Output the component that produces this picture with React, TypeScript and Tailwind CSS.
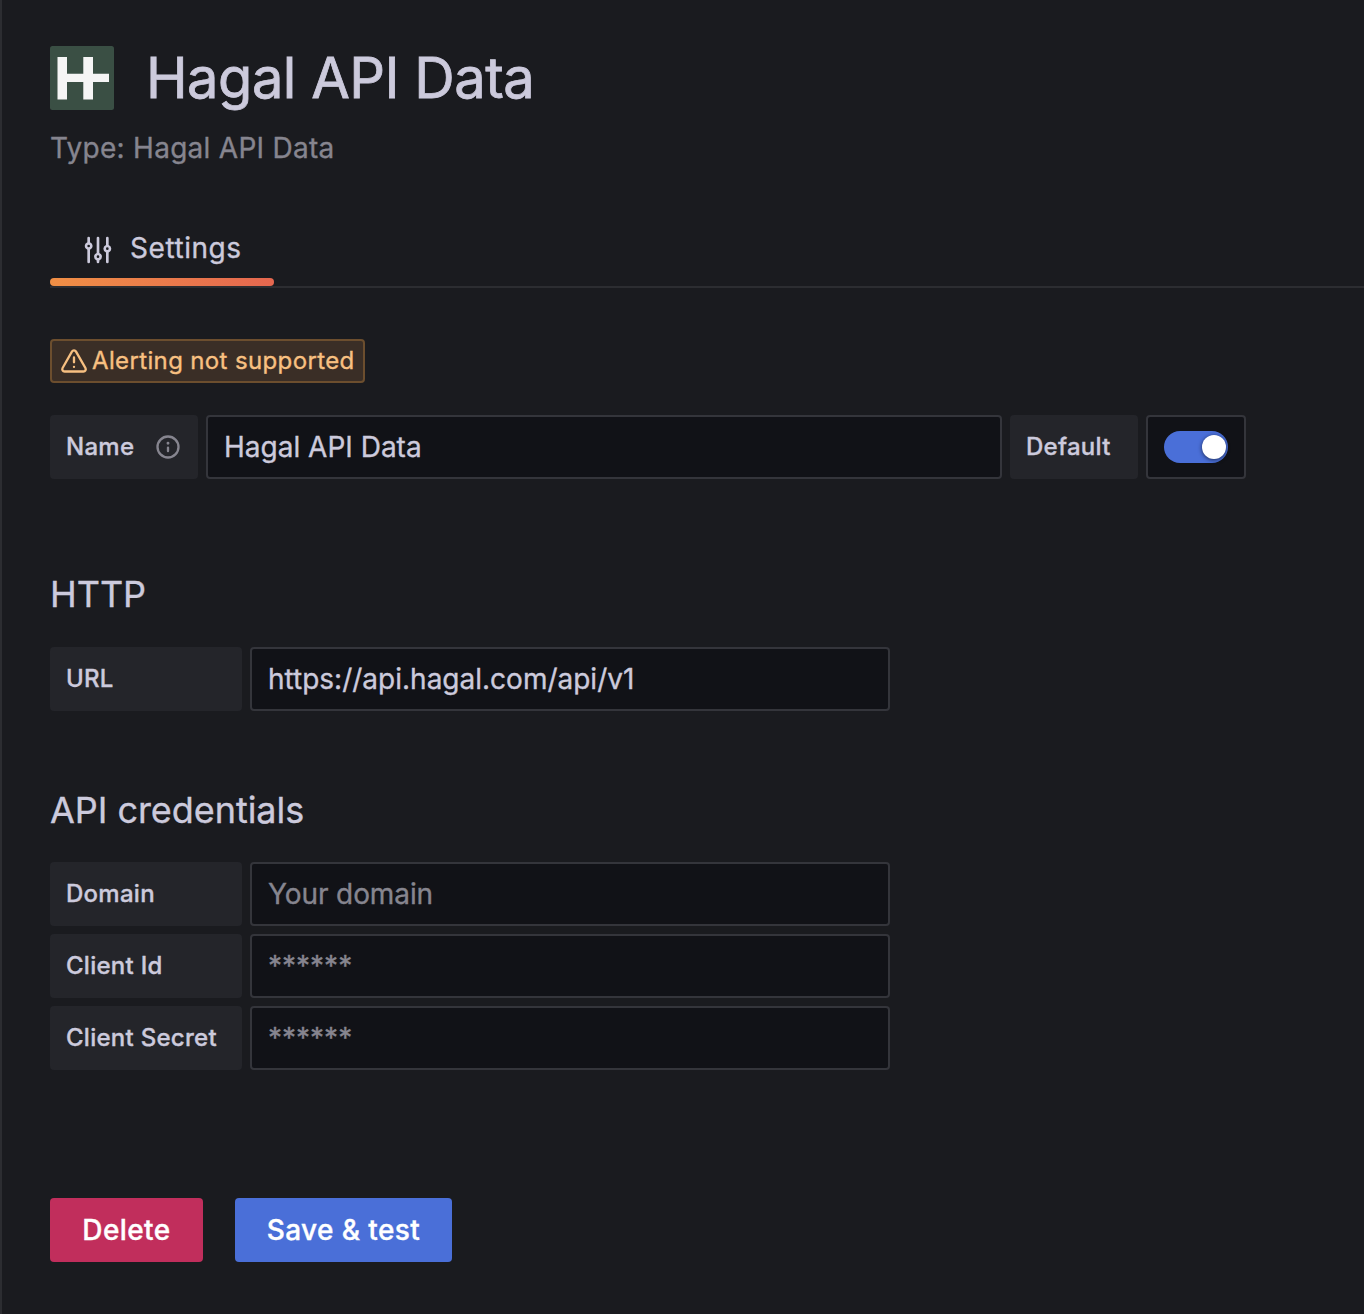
import React from "react";

const ICONS = {
  sliders:
    "M20,8.18V3a1,1,0,0,0-2,0V8.18a3,3,0,0,0,0,5.64V21a1,1,0,0,0,2,0V13.82a3,3,0,0,0,0-5.64ZM19,12a1,1,0,1,1,1-1A1,1,0,0,1,19,12Zm-6,2.18V3a1,1,0,0,0-2,0V14.18a3,3,0,0,0,0,5.64V21a1,1,0,0,0,2,0V19.82a3,3,0,0,0,0-5.64ZM12,18a1,1,0,1,1,1-1A1,1,0,0,1,12,18ZM6,6.18V3A1,1,0,0,0,4,3V6.18a3,3,0,0,0,0,5.64V21a1,1,0,0,0,2,0V11.82A3,3,0,0,0,6,6.18ZM5,10A1,1,0,1,1,6,9,1,1,0,0,1,5,10Z",
  warning:
    "M12,16a1,1,0,1,0,1,1A1,1,0,0,0,12,16Zm10.67,1.47-8.05-14a3,3,0,0,0-5.24,0l-8,14A3,3,0,0,0,3.94,22H20.06a3,3,0,0,0,2.61-4.53Zm-1.73,2a1,1,0,0,1-.88.51H3.94a1,1,0,0,1-.88-.51,1,1,0,0,1,0-1l8-14a1,1,0,0,1,1.78,0l8.05,14A1,1,0,0,1,20.94,19.49ZM12,8a1,1,0,0,0-1,1v4a1,1,0,0,0,2,0V9A1,1,0,0,0,12,8Z",
  info:
    "M12,2A10,10,0,1,0,22,12,10.01,10.01,0,0,0,12,2Zm0,18a8,8,0,1,1,8-8A8.01,8.01,0,0,1,12,20Zm0-8.5a1,1,0,0,0-1,1v3a1,1,0,0,0,2,0v-3A1,1,0,0,0,12,11.5Zm0-4a1.25,1.25,0,1,0,1.25,1.25A1.25,1.25,0,0,0,12,7.5Z",
};

function Icon({ name, className }: { name: keyof typeof ICONS; className: string }) {
  return (
    <svg viewBox="0 0 24 24" fill="currentColor" className={`shrink-0 ${className}`}>
      <path d={ICONS[name]} />
    </svg>
  );
}

function Label({ children, className, icon }: { children: React.ReactNode; className: string; icon?: React.ReactNode }) {
  return (
    <div className={`flex h-16 shrink-0 items-center justify-between rounded-[4px] bg-[#24252a] px-4 text-[24px] font-medium leading-[30px] tracking-[0.27px] ${className}`}>
      <span className="whitespace-nowrap">{children}</span>
      {icon}
    </div>
  );
}

function Field({ children, className }: { children: React.ReactNode; className: string }) {
  return (
    <div className={`flex h-16 shrink-0 items-center rounded-[4px] border-2 border-[#34353b] bg-[#111217] pl-4 text-[28px] leading-none ${className}`}>
      {children}
    </div>
  );
}

export default function App() {
  return (
    <div className="h-[1314px] w-[1364px] overflow-hidden border-l-2 border-[#2c2d31] bg-[#1a1b1f] pl-12 font-['Inter',sans-serif] text-[#cccadc] [-webkit-text-stroke:0.35px_currentColor]">
      <header className="mt-[46px] flex h-16 items-center">
        <svg width="64" height="64" viewBox="0 0 64 64">
          <rect width="64" height="64" rx="2.5" fill="#3a4f44" />
          <path d="M7.5 11H17v16.7h16.3V11H43v16.7h16v8.4H43v17.4h-9.7V36.1H17v17.4H7.5z" fill="#f5f5f5" />
        </svg>
        <h1 className="ml-8 whitespace-nowrap text-[56px] leading-none tracking-[-0.5px] [-webkit-text-stroke:0.8px_currentColor]">Hagal API Data</h1>
      </header>
      <div className="mt-[20px] h-9 text-[28px] leading-9 tracking-[0.27px] text-[#86858f]">Type: Hagal API Data</div>
      <nav className="mt-[46px] h-[76px] border-b-2 border-[#2c2d31]">
        <div className="flex h-[74px] w-56 flex-col">
          <div className="flex h-[66px] items-center gap-4 pl-8 text-[28px] leading-9 tracking-[0.55px]">
            <Icon name="sliders" className="mt-[10px] size-8" />
            <span className="mt-[6px]">Settings</span>
          </div>
          <div className="h-2 rounded-[4px] bg-linear-to-r from-[#f08f45] to-[#e5674f]" />
        </div>
      </nav>
      <div className="mt-[51px] flex h-11 w-[315px] items-center gap-1 rounded-[4px] border-2 border-[#6c4e2e] bg-[#3a2e26] pl-2 text-[24px] tracking-[0.36px] text-[#f8c081]">
        <Icon name="warning" className="size-7" />
        <span className="whitespace-nowrap">Alerting not supported</span>
      </div>
      <div className="mt-8 flex gap-2">
        <Label className="w-[148px]" icon={<Icon name="info" className="size-7 text-[#86858f]" />}>Name</Label>
        <Field className="w-[796px]">Hagal API Data</Field>
        <Label className="w-32">Default</Label>
        <Field className="w-[100px]">
          <div className="flex h-8 w-16 items-center justify-end rounded-full bg-[#4a6fd8] pr-0.5">
            <div className="size-6 rounded-full bg-white shadow-[0_1px_4px_rgba(0,0,0,0.6)]" />
          </div>
        </Field>
      </div>
      <h2 className="mt-[93px] h-[44px] text-[36px] leading-[44px] tracking-[-0.05px]">HTTP</h2>
      <div className="mt-[31px] flex gap-2">
        <Label className="w-48">URL</Label>
        <Field className="w-[640px]">https://api.hagal.com/api/v1</Field>
      </div>
      <h2 className="mt-[77px] h-[44px] text-[36px] leading-[44px] tracking-[-0.05px]">API credentials</h2>
      <div className="mt-[30px] flex flex-col gap-2">
        <div className="flex gap-2">
          <Label className="w-48">Domain</Label>
          <Field className="w-[640px] tracking-[-0.1px] text-[#86858f]">Your domain</Field>
        </div>
        <div className="flex gap-2">
          <Label className="w-48">Client Id</Label>
          <Field className="w-[640px] text-[#86858f]">******</Field>
        </div>
        <div className="flex gap-2">
          <Label className="w-48">Client Secret</Label>
          <Field className="w-[640px] text-[#86858f]">******</Field>
        </div>
      </div>
      <div className="mt-32 flex gap-8 text-[28px] font-medium tracking-[0.4px] text-white">
        <button className="h-16 w-[153px] rounded-[4px] bg-[#c12e5c]">Delete</button>
        <button className="h-16 w-[217px] rounded-[4px] bg-[#4a6fd8]">Save &amp; test</button>
      </div>
    </div>
  );
}
